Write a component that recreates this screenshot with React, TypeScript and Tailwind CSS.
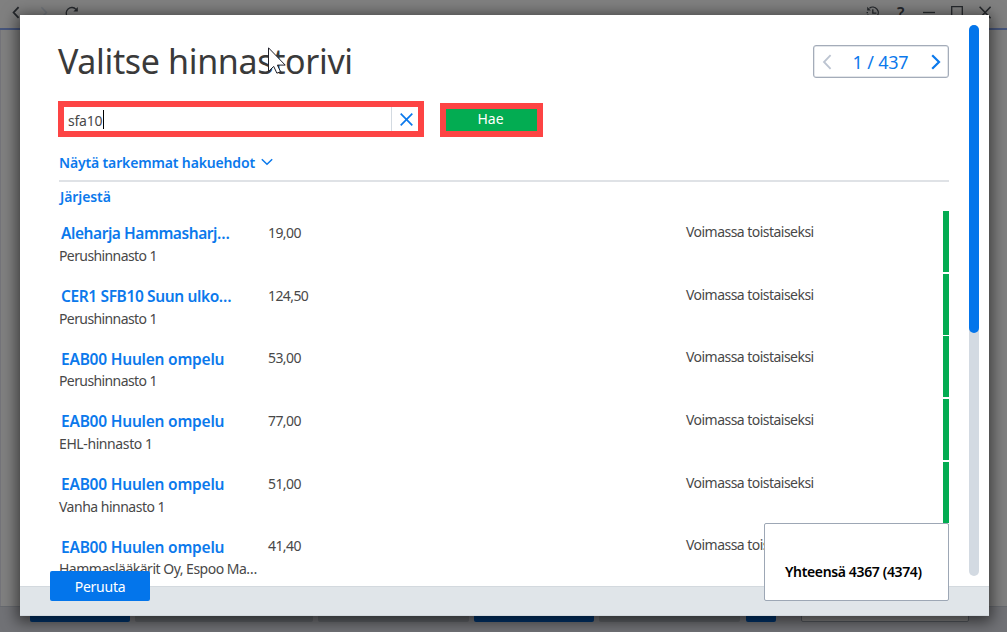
import { useState } from "react";

interface PriceRow {
  name: string;
  list: string;
  price: string;
  nameClass: string;
  listClass: string;
}

const ROWS: PriceRow[] = [
  { name: "Aleharja Hammasharj…", list: "Perushinnasto 1", price: "19,00", nameClass: "tracking-[-0.44px]", listClass: "tracking-[-0.6px]" },
  { name: "CER1 SFB10 Suun ulko…", list: "Perushinnasto 1", price: "124,50", nameClass: "tracking-[-0.38px]", listClass: "tracking-[-0.6px]" },
  { name: "EAB00 Huulen ompelu", list: "Perushinnasto 1", price: "53,00", nameClass: "tracking-[-0.22px]", listClass: "tracking-[-0.6px]" },
  { name: "EAB00 Huulen ompelu", list: "EHL-hinnasto 1", price: "77,00", nameClass: "tracking-[-0.22px]", listClass: "tracking-[-0.4px]" },
  { name: "EAB00 Huulen ompelu", list: "Vanha hinnasto 1", price: "51,00", nameClass: "tracking-[-0.22px]", listClass: "tracking-[-0.5px]" },
  { name: "EAB00 Huulen ompelu", list: "Hammaslääkärit Oy, Espoo Ma…", price: "41,40", nameClass: "tracking-[-0.22px]", listClass: "tracking-[-0.5px]" },
];

function WindowChrome() {
  return (
    <div className="flex h-full flex-col">
      <header className="flex h-[30px] justify-between border-b-2 border-[#47567c] bg-[#808080] pr-[16px] pl-[12px] text-[#25282c]">
        <div className="flex items-start pt-[6px]">
          <svg width="8" height="13" viewBox="0 0 8 13" fill="none" stroke="currentColor" strokeWidth="1.8">
            <path d="M6.6 1.2 1.6 6.5l5 5.3" />
          </svg>
          <svg className="ml-5 text-[#70747a]" width="8" height="13" viewBox="0 0 8 13" fill="none" stroke="currentColor" strokeWidth="1.6">
            <path d="m1.4 1.2 5 5.3-5 5.3" />
          </svg>
          <svg className="ml-[17px]" width="14" height="14" viewBox="0 0 14 14" fill="none" stroke="currentColor" strokeWidth="1.3">
            <path d="M2.6 10.8A5.5 5.5 0 1 1 11 3.4" />
            <path d="M12.8 1v4.4H8.4z" fill="currentColor" stroke="none" />
          </svg>
        </div>
        <div className="flex items-start pt-[6px]">
          <svg width="14" height="14" viewBox="0 0 14 14" fill="none" stroke="currentColor" strokeWidth="1.3">
            <path d="M3.4 2.2A5.6 5.6 0 1 1 3 11M6.8 3.2v4h3.6" />
            <path d="M1.2.8v3.6h3.6z" fill="currentColor" stroke="none" />
            <path d="M.6 6.6H2M1.200 9.200h1.400" />
          </svg>
          <span className="mt-[-1px] ml-[17px] w-3 text-[16px] leading-[16px] font-semibold">?</span>
          <svg className="ml-[14px]" width="12" height="13" viewBox="0 0 12 13" stroke="currentColor" strokeWidth="1.3">
            <path d="M0 6.5h12" />
          </svg>
          <svg className="ml-[16px]" width="12" height="13" viewBox="0 0 12 13" fill="none" stroke="currentColor" strokeWidth="1.3">
            <path d="M.7.7h10.6v11.6H.7z" />
          </svg>
          <svg className="ml-[16px]" width="12" height="13" viewBox="0 0 12 13" stroke="currentColor" strokeWidth="1.5">
            <path d="m.6.8 11 11.4M11.6.8.6 12.2" />
          </svg>
        </div>
      </header>
      <div className="flex-1 border-l border-[#74747a] bg-[#808080]" />
      <footer className="flex h-[26px] border-t border-[#676a6f] bg-[#717276] pl-[30px]">
        <div className="h-[15px] w-[100px] rounded-[2px] bg-[#00346c]" />
        <div className="ml-[5px] h-[15px] w-[178px] rounded-[2px] bg-[#606367]" />
        <div className="ml-[5px] h-[15px] w-[151px] rounded-[2px] bg-[#606367]" />
        <div className="ml-[5px] h-[15px] w-[120px] rounded-[2px] bg-[#00346c]" />
        <div className="ml-[5px] h-[15px] w-[141px] rounded-[2px] bg-[#606367]" />
        <div className="ml-[6px] h-[15px] w-[30px] rounded-[2px] bg-[#00346c]" />
        <div className="ml-[25px] h-[15px] w-[168px] rounded-[2px] border border-[#52565c] bg-[#808080]" />
      </footer>
    </div>
  );
}

function Pager() {
  return (
    <div className="mt-[30px] flex h-[33px] w-[136px] items-center justify-between rounded-[3px] border-[1.5px] border-[#a4acb9] pr-[7px] pl-[8px] ring-[0.5px] ring-[#c8ced6] ring-inset">
      <svg width="10" height="16" viewBox="0 0 10 16" fill="none" stroke="#bcc4d1" strokeWidth="1.8">
        <path d="M8.6 1.2 2 8l6.6 6.8" />
      </svg>
      <span className="mr-[2px] text-[18px] leading-6 tracking-[-0.2px] text-[#0b79ec]">1 / 437</span>
      <svg width="10" height="16" viewBox="0 0 10 16" fill="none" stroke="#0b79ec" strokeWidth="2.2">
        <path d="M1.2 1.2 8 8l-6.8 6.8" />
      </svg>
    </div>
  );
}

function ResultRow({ row }: { row: PriceRow }) {
  return (
    <div className="flex h-[62.7px] shrink-0 text-[14px] leading-[22px] text-[#484848]">
      <div className="w-[208px] whitespace-nowrap">
        <div className={`mt-[11.4px] pl-[2px] text-[15.5px] font-semibold text-[#0b79ec] ${row.nameClass}`}>{row.name}</div>
        <div className={`mt-[0.6px] ${row.listClass}`}>{row.list}</div>
      </div>
      <div className="mt-[11px] w-[418px] pl-px tracking-[-0.6px]">{row.price}</div>
      <div className="mt-[10px] w-[258px] pl-px tracking-[-0.53px]">Voimassa toistaiseksi</div>
      <div className="h-[61px] w-[6px] bg-[#03ac52]" />
    </div>
  );
}

export default function App() {
  const [query, setQuery] = useState("sfa10");

  return (
    <div className="relative h-[632px] w-[1007px] overflow-hidden bg-[#808080] font-['Noto_Sans','Open_Sans',sans-serif]">
      <WindowChrome />

      <div className="absolute top-[15px] left-[20px] flex h-[601px] w-[969px] flex-col bg-white shadow-[0_3px_14px_3px_rgba(0,0,0,0.55)]">
        <div className="flex h-[571px] overflow-hidden">
          <div className="flex w-[929px] flex-col pl-[38px]">
            <div className="flex h-[86px] shrink-0 justify-between">
              <h1 className="mt-[22px] text-[34px] leading-[48px] tracking-[-0.35px] whitespace-nowrap text-[#3a3a3a]">
                Valitse hinnastorivi
              </h1>
              <Pager />
            </div>

            <div className="flex h-9 shrink-0 items-end">
              <div className="flex h-9 w-[366px] border-[6px] border-[#fd4444] bg-white">
                <input
                  value={query}
                  onChange={(e) => setQuery(e.target.value)}
                  className="w-[328px] border-r border-[#d3dae1] pt-[2px] pl-[4px] text-[14px] tracking-[-0.2px] text-[#484848] outline-none"
                />
                <button className="flex flex-1 items-center justify-center" onClick={() => setQuery("")}>
                  <svg className="ml-[3px]" width="13" height="13" viewBox="0 0 13 13" stroke="#0b79ec" strokeWidth="1.7">
                    <path d="m.7.7 11.6 11.6M12.3.7.7 12.3" />
                  </svg>
                </button>
              </div>
              <button className="ml-4 h-[34px] w-[103px] border-[6px] border-[#fd4444] bg-[#03ac52] pr-[2px] pb-[3px] text-[14px] leading-[19px] text-white">
                Hae
              </button>
            </div>

            <div className="ml-px flex h-[45px] shrink-0 items-center border-b-2 border-[#dfe2e6] pt-[8px] text-[14px] font-semibold text-[#0b79ec]">
              <span className="tracking-[-0.15px] whitespace-nowrap">Näytä tarkemmat hakuehdot</span>
              <svg className="mb-[1px] ml-[6px]" width="12" height="8" viewBox="0 0 12 8" fill="none" stroke="currentColor" strokeWidth="1.5">
                <path d="m.8 1.2 5.2 5.1 5.2-5.1" />
              </svg>
            </div>
            <div className="ml-px h-[29px] shrink-0 pt-[5px] pl-px text-[14px] leading-[20px] font-semibold tracking-[-0.1px] text-[#0b79ec]">
              Järjestä
            </div>

            <div className="ml-px flex shrink-0 flex-col">
              {ROWS.map((row, i) => (
                <ResultRow key={i} row={row} />
              ))}
            </div>
          </div>

          <div className="mt-[10px] ml-5 h-[551px] w-[10px] rounded-full bg-[#d3dae2]">
            <div className="h-[308px] rounded-full bg-[#0375eb]" />
          </div>
        </div>

        <div className="h-[30px] border-y border-[#d3d9de] bg-[#e0e5e9]" />

        {/* floating action and totals overlap the footer edge */}
        <button className="absolute top-[556px] left-[30px] h-[30px] w-[100px] rounded-[2px] bg-[#0375eb] text-[14px] tracking-[-0.25px] text-white">
          Peruuta
        </button>
        <div className="absolute top-[508px] left-[744px] flex h-[78px] w-[185px] items-end rounded-[2px] border border-[#9da7b5] bg-white pb-[17px] pl-[20px] text-[14px] leading-[22px] font-semibold tracking-[-0.36px] whitespace-nowrap text-black">
          Yhteensä 4367 (4374)
        </div>
        <div className="absolute top-[95px] left-[83px] h-[19px] w-px bg-black" />
        <svg className="absolute top-[32px] left-[248px]" width="19" height="28" viewBox="0 0 19 28" fill="#fff" stroke="#20202a" strokeWidth="1">
          <path d="M.5.8v23.6l5.2-5 3.2 6.800 3.600-1.600-3.100-6.500h7.800z" />
        </svg>
      </div>
    </div>
  );
}
